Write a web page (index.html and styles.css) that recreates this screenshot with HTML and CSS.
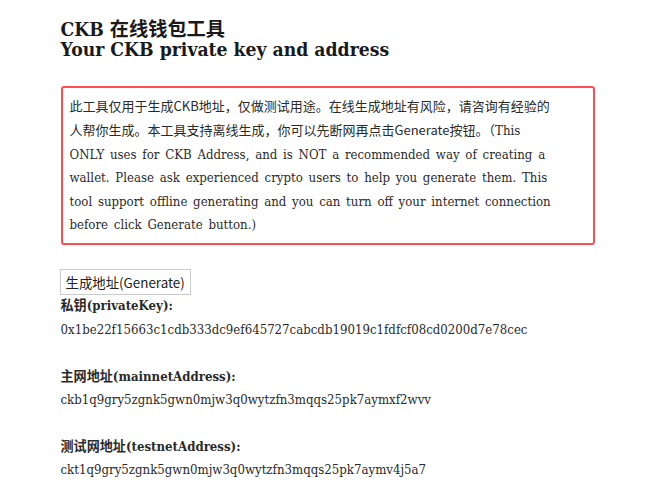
FILE: index.html
```html
<!DOCTYPE html>
<html lang="zh-CN">
<head>
<meta charset="utf-8">
<title>CKB 在线钱包工具</title>
<link rel="stylesheet" href="styles.css">
</head>
<body>
<main class="page">
  <h1 class="title">CKB 在线钱包工具<br>Your CKB private key and address</h1>
  <div class="warning">
    <p class="warning-text"><span class="zh">此工具仅用于生成CKB地址，仅做测试用途。在线生成地址有风险，请咨询有经验的人帮你生成。本工具支持离线生成，你可以先断网再点击Generate按钮。</span>（This ONLY uses for CKB Address, and is NOT a recommended way of creating a wallet. Please ask experienced crypto users to help you generate them. This tool support offline generating and you can turn off your internet connection before click Generate button.)</p>
  </div>
  <button class="gen-btn" type="button">生成地址(Generate)</button>
  <section class="results">
    <div class="field">
      <div class="label">私钥(privateKey):</div>
      <div class="value">0x1be22f15663c1cdb333dc9ef645727cabcdb19019c1fdfcf08cd0200d7e78cec</div>
    </div>
    <div class="field">
      <div class="label">主网地址(mainnetAddress):</div>
      <div class="value">ckb1q9gry5zgnk5gwn0mjw3q0wytzfn3mqqs25pk7aymxf2wvv</div>
    </div>
    <div class="field">
      <div class="label">测试网地址(testnetAddress):</div>
      <div class="value">ckt1q9gry5zgnk5gwn0mjw3q0wytzfn3mqqs25pk7aymv4j5a7</div>
    </div>
  </section>
</main>
</body>
</html>
```

FILE: styles.css
```css
html, body {
  margin: 0;
  padding: 0;
  background: #ffffff;
}

body {
  font-family: "DejaVu Serif", "Noto Sans CJK SC", serif;
  font-stretch: condensed;
  color: #2a2a2a;
  font-size: 13.1px;
  line-height: 23.4px;
}

.page {
  width: 540px;
  margin: 0 auto;
  padding-top: 20px;
}

.title {
  margin: 0;
  font-size: 19.2px;
  line-height: 20px;
  font-weight: bold;
  color: #1a1a1a;
}

.warning {
  margin: 26px 6px 0 0;
  padding: 6px 7px 7px 7px;
  border: 2px solid #ff4d55;
  border-radius: 3px;
}

.warning-text {
  margin: 0;
  width: 488px;
  word-spacing: 2px;
}

.zh {
  font-family: "Noto Sans CJK SC", sans-serif;
  font-size: 13px;
  word-spacing: 0;
}

.gen-btn {
  display: block;
  box-sizing: border-box;
  margin: 24px 0 0 -1px;
  height: 26px;
  padding: 0 5px;
  font-family: "Noto Sans CJK SC", sans-serif;
  font-size: 13.4px;
  color: #222222;
  background: #ffffff;
  border: 1px solid #cccccc;
  border-radius: 0;
}

.results {
  display: flex;
  flex-direction: column;
  gap: 23.4px;
  margin-top: -1px;
}

.label {
  font-weight: bold;
}
```
